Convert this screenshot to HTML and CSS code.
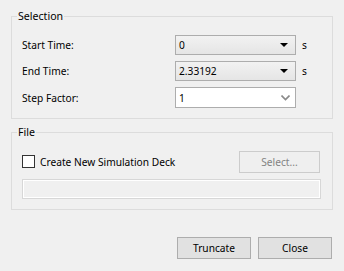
FILE: index.html
```html
<!DOCTYPE html>
<html lang="en">
<head>
    <meta charset="UTF-8">
    <title>Truncate</title>
    <link rel="stylesheet" href="styles.css">
</head>
<body>
    <fieldset class="group">
        <legend>Selection</legend>
        <div class="grid">
            <label>Start Time:</label>
            <div class="combo"><span>0</span><span class="arrow"></span></div>
            <span class="unit">s</span>

            <label>End Time:</label>
            <div class="combo"><span>2.33192</span><span class="arrow"></span></div>
            <span class="unit">s</span>

            <label>Step Factor:</label>
            <div class="combo edit">
                <span>1</span>
                <svg width="9" height="6" viewBox="0 0 9 6"><path d="M0.5 0.5 L4.5 4.5 L8.5 0.5" fill="none" stroke="#8a8a8a" stroke-width="1.6"/></svg>
            </div>
            <span></span>
        </div>
    </fieldset>

    <fieldset class="group file">
        <legend>File</legend>
        <div class="row">
            <label class="check"><span class="box"></span>Create New Simulation Deck</label>
            <button class="btn disabled">Select...</button>
        </div>
        <div class="field"></div>
    </fieldset>

    <div class="actions">
        <button class="btn">Truncate</button>
        <button class="btn">Close</button>
    </div>
</body>
</html>
```

FILE: styles.css
```css
body {
    margin: 0;
    width: 344px;
    height: 271px;
    background: #f0f0f0;
    font-family: "Noto Sans", sans-serif;
    font-size: 10.2px;
    color: #000;
    overflow: hidden;
}
.group {
    margin: 9px 11px 0 11px;
    padding: 12px 10px 10px 10px;
    border: 1px solid #dcdcdc;
    min-width: 0;
}
.group legend {
    padding: 0 1px;
    margin-left: -5px;
    line-height: 14px;
    font-size: 10.6px;
}
.grid {
    display: grid;
    grid-template-columns: 153px 121px 1fr;
    row-gap: 6px;
    align-items: center;
}
.grid label {
    line-height: 20px;
}
.combo {
    height: 18px;
    border: 1px solid #adadad;
    background: linear-gradient(#f2f2f2, #e5e5e5);
    display: flex;
    align-items: center;
    justify-content: space-between;
    padding: 0 7px 0 3px;
}
.combo.edit {
    background: #fff;
    height: 19px;
    padding-right: 5px;
}
.arrow {
    width: 0;
    height: 0;
    border-left: 4px solid transparent;
    border-right: 4px solid transparent;
    border-top: 4px solid #000;
}
.unit {
    padding-left: 6px;
}
.file {
    margin-top: 6px;
    padding-right: 11px;
}
.row {
    display: flex;
    justify-content: space-between;
    align-items: center;
    height: 21px;
}
.check {
    display: flex;
    align-items: center;
    gap: 5px;
}
.box {
    width: 11px;
    height: 11px;
    border: 1px solid #333;
    background: #fff;
}
.btn {
    font-family: inherit;
    font-size: 10.2px;
    color: #000;
    background: #e1e1e1;
    border: 1px solid #adadad;
    width: 74px;
    height: 22px;
    padding: 0;
}
.btn.disabled {
    width: 81px;
    background: #efefef;
    border-color: #cccccc;
    color: #838383;
    margin-right: 1px;
}
.field {
    margin-top: 7px;
    height: 18px;
    border: 1px solid #d7d7d7;
    box-shadow: inset 0 0 0 1px #fff;
    background: #f0f0f0;
}
.actions {
    display: flex;
    justify-content: flex-end;
    gap: 7px;
    margin: 27px 12px 0 0;
}
```
